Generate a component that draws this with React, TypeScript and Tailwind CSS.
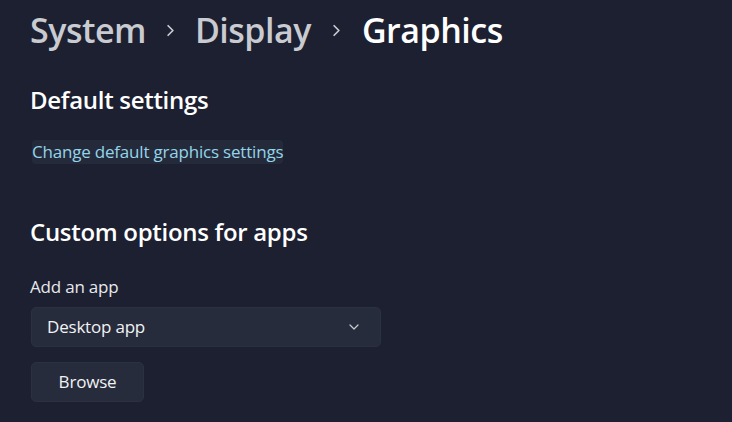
import { ChevronDown, ChevronRight } from "lucide-react";

const font = { fontFamily: '"Open Sans", "Noto Sans", sans-serif' };

function Breadcrumb() {
  return (
    <div className="flex h-[60px] items-center text-[34px] font-semibold leading-none tracking-[-0.5px]">
      <span className="text-[#c9cbd1]">System</span>
      <ChevronRight className="mx-[15px] h-[19px] w-[19px] text-[#c9cbd1]" strokeWidth={2.2} />
      <span className="text-[#c9cbd1]">Display</span>
      <ChevronRight className="mx-[16px] h-[19px] w-[19px] text-[#c9cbd1]" strokeWidth={2.2} />
      <span className="text-white">Graphics</span>
    </div>
  );
}

export default function App() {
  return (
    <div
      className="h-[422px] w-[732px] overflow-hidden bg-[#1c2031] pl-[30px] text-white antialiased"
      style={font}
    >
      <Breadcrumb />

      <h2 className="mt-[24px] h-[32px] text-[24px] font-semibold leading-[32px] tracking-[-0.3px]">
        Default settings
      </h2>

      <div className="mt-[24px] flex">
        <a
          href="#"
          className="ml-[2px] flex h-[24px] items-center rounded-[4px] bg-[#252a3a] text-[17px] text-[#93d5ea] tracking-[-0.2px]"
        >
          Change default graphics settings
        </a>
      </div>

      <h2 className="mt-[52px] h-[32px] text-[24px] font-semibold leading-[32px] tracking-[-0.3px]">
        Custom options for apps
      </h2>

      <div className="mt-[28px] h-[22px] text-[17px] leading-[22px] tracking-[-0.2px] text-[#e8e9ec]">
        Add an app
      </div>

      <button
        type="button"
        className="mt-[9px] ml-[1px] flex h-[40px] w-[350px] items-center justify-between rounded-[5px] border border-[#2c3141] bg-[#272c3c] pl-[15px] pr-[18px] text-[17px] tracking-[-0.2px] text-[#f1f2f4]"
      >
        <span>Desktop app</span>
        <ChevronDown className="h-[16px] w-[16px] text-[#c9cbd1]" strokeWidth={1.8} />
      </button>

      <button
        type="button"
        className="mt-[15px] ml-[1px] flex h-[40px] w-[113px] items-center justify-center rounded-[5px] border border-[#2c3141] bg-[#272c3c] text-[17px] tracking-[-0.2px] text-[#f1f2f4]"
      >
        Browse
      </button>
    </div>
  );
}
